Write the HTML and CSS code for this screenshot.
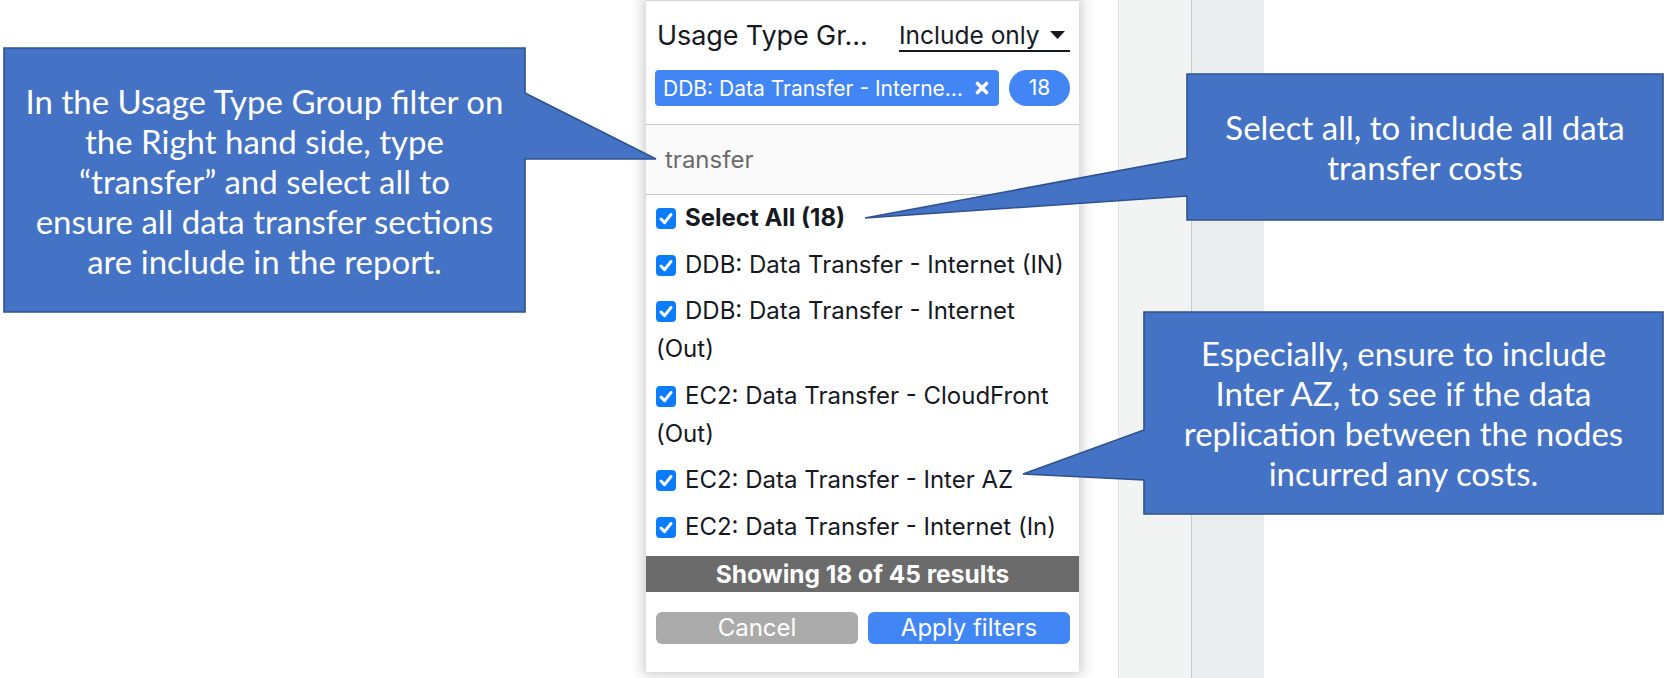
FILE: index.html
```html
<!DOCTYPE html>
<html lang="en">
<head>
<meta charset="utf-8">
<title>Usage Type Group filter</title>
<link rel="stylesheet" href="styles.css">
</head>
<body>
<div class="page">
  <div class="backdrop">
    <div class="lead"></div>
    <section class="panel">
      <header class="panel-head">
        <span class="panel-title">Usage Type Gr…</span>
        <span class="mode"><span class="mode-text">Include only</span><svg class="caret" width="15" height="8" viewBox="0 0 15 8"><path d="M0 0H15L7.5 8Z"/></svg></span>
      </header>
      <div class="chips">
        <span class="chip"><span class="chip-text">DDB: Data Transfer - Interne…</span><svg class="chip-x" width="14" height="14" viewBox="0 0 14 14"><path d="M2.5 2.5L11.5 11.5M11.5 2.5L2.5 11.5"/></svg></span>
        <span class="count">18</span>
      </div>
      <div class="search">transfer</div>
      <ul class="options">
        <li class="option option-all"><span class="box"><svg width="20" height="21" viewBox="0 0 20 21"><path d="M5 11L8.6 14.6L15 6.5"/></svg></span>Select All (18)</li>
        <li class="option"><span class="box"><svg width="20" height="21" viewBox="0 0 20 21"><path d="M5 11L8.6 14.6L15 6.5"/></svg></span>DDB: Data Transfer - Internet (IN)</li>
        <li class="option"><span class="box"><svg width="20" height="21" viewBox="0 0 20 21"><path d="M5 11L8.6 14.6L15 6.5"/></svg></span>DDB: Data Transfer - Internet (Out)</li>
        <li class="option"><span class="box"><svg width="20" height="21" viewBox="0 0 20 21"><path d="M5 11L8.6 14.6L15 6.5"/></svg></span>EC2: Data Transfer - CloudFront (Out)</li>
        <li class="option"><span class="box"><svg width="20" height="21" viewBox="0 0 20 21"><path d="M5 11L8.6 14.6L15 6.5"/></svg></span>EC2: Data Transfer - Inter AZ</li>
        <li class="option"><span class="box"><svg width="20" height="21" viewBox="0 0 20 21"><path d="M5 11L8.6 14.6L15 6.5"/></svg></span>EC2: Data Transfer - Internet (In)</li>
      </ul>
      <div class="status">Showing 18 of 45 results</div>
      <div class="actions">
        <button class="btn btn-cancel" type="button">Cancel</button>
        <button class="btn btn-apply" type="button">Apply filters</button>
      </div>
    </section>
    <div class="gap"></div>
    <div class="col col-a"></div>
    <div class="col col-b"></div>
  </div>

  <svg class="callouts" width="1668" height="678" viewBox="0 0 1668 678">
    <path d="M4 48H525V93L656 159L525 159V312H4Z"/>
    <path d="M1187 74H1663V220H1187V196L865 218L1187 158Z"/>
    <path d="M1144 312H1663V514H1144V480L1023 474L1144 430Z"/>
  </svg>

  <div class="note note-left">In the Usage Type Group filter on<br>the Right hand side, type<br>“transfer” and select all to<br>ensure all data transfer sections<br>are include in the report.</div>
  <div class="note note-select">Select all, to include all data<br>transfer costs</div>
  <div class="note note-az">Especially, ensure to include<br>Inter AZ, to see if the data<br>replication between the nodes<br>incurred any costs.</div>
</div>
</body>
</html>
```

FILE: styles.css
```css
html, body {
  margin: 0;
  padding: 0;
  background: #ffffff;
}

.page {
  position: relative;
  width: 1668px;
  height: 678px;
  overflow: hidden;
  font-family: "Inter", "Roboto", sans-serif;
  color: #16191f;
}

.backdrop {
  display: flex;
  align-items: flex-start;
  height: 678px;
}

.lead {
  width: 646px;
  flex: none;
}

.panel {
  position: relative;
  z-index: 1;
  flex: none;
  width: 433px;
  box-sizing: border-box;
  background: #ffffff;
  border-top: 1px solid #d5d5d5;
  box-shadow: 0 0 12px 3px rgba(0, 0, 0, 0.2);
  padding-bottom: 28px;
}

.panel-head {
  display: flex;
  justify-content: space-between;
  align-items: flex-end;
  height: 51px;
  padding: 0 9px 0 11px;
}

.panel-title {
  font-size: 27px;
  line-height: 32px;
  letter-spacing: -0.1px;
  white-space: nowrap;
}

.mode {
  flex: none;
  display: flex;
  align-items: center;
  width: 171px;
  box-sizing: border-box;
  padding-right: 5px;
  border-bottom: 2px solid #16191f;
  font-size: 24.5px;
  line-height: 30px;
  white-space: nowrap;
}

.caret {
  fill: #16191f;
  margin-left: auto;
}

.chips {
  display: flex;
  gap: 10px;
  margin-top: 18px;
  padding: 0 9px 18px 9px;
  border-bottom: 1px solid #c8c8c8;
}

.chip {
  flex: 1;
  display: flex;
  align-items: center;
  justify-content: space-between;
  height: 36px;
  padding: 0 10px 0 8px;
  border-radius: 4px;
  background: #4285f4;
  color: #ffffff;
  font-size: 21px;
  white-space: nowrap;
}

.chip-x {
  stroke: #ffffff;
  stroke-width: 3.6;
  stroke-linecap: round;
}

.count {
  width: 61px;
  height: 36px;
  border-radius: 18px;
  background: #4285f4;
  color: #ffffff;
  font-size: 21px;
  line-height: 36px;
  text-align: center;
}

.search {
  height: 69px;
  line-height: 69px;
  padding-left: 19px;
  background: #fafafa;
  color: #6b6b6b;
  font-size: 24px;
  border-bottom: 1px solid #c8c8c8;
}

.options {
  list-style: none;
  margin: 0;
  padding: 0 8px 0 10px;
}

.option {
  font-size: 24px;
  line-height: 38px;
  padding: 4px 0 4.5px;
}

.option-all {
  font-weight: 700;
}

.box {
  display: inline-block;
  width: 20px;
  height: 21px;
  margin-right: 9px;
  border-radius: 4px;
  background: #0a7cff;
  vertical-align: -3px;
}

.box svg {
  display: block;
  fill: none;
  stroke: #ffffff;
  stroke-width: 3;
  stroke-linecap: round;
  stroke-linejoin: round;
}

.status {
  margin-top: 6px;
  height: 36px;
  line-height: 36px;
  background: #6b6b6b;
  color: #ffffff;
  font-size: 24.5px;
  font-weight: 700;
  text-align: center;
}

.actions {
  display: flex;
  gap: 10px;
  margin-top: 20px;
  padding: 0 9px 0 10px;
}

.btn {
  flex: 1;
  height: 32px;
  border: none;
  border-radius: 6px;
  color: #ffffff;
  font-family: "Inter", "Roboto", sans-serif;
  font-size: 24px;
  line-height: 32px;
  padding: 0;
}

.btn-cancel {
  background: #ababab;
}

.btn-apply {
  background: #4285f4;
}

.gap {
  width: 39px;
  height: 678px;
  flex: none;
}

.col {
  flex: none;
  height: 678px;
}

.col-a {
  width: 72px;
  background: #f2f3f3;
  border-left: 1px solid #e3e6e6;
}

.col-b {
  width: 72px;
  background: #eaeded;
  border-left: 1px solid #c6cbcb;
}

.callouts {
  position: absolute;
  left: 0;
  top: 0;
  z-index: 2;
  pointer-events: none;
}

.callouts path {
  fill: #4472c4;
  stroke: #2f528f;
  stroke-width: 1.6;
  stroke-linejoin: miter;
}

.note {
  position: absolute;
  z-index: 3;
  display: flex;
  align-items: center;
  justify-content: center;
  text-align: center;
  color: #ffffff;
  font-family: "Lato", "Open Sans", sans-serif;
  font-size: 33px;
  line-height: 40px;
}

.note-left {
  left: 4px;
  top: 48px;
  width: 521px;
  height: 266px;
}

.note-select {
  left: 1187px;
  top: 74px;
  width: 476px;
  height: 146px;
}

.note-az {
  left: 1144px;
  top: 312px;
  width: 519px;
  height: 202px;
}
```
